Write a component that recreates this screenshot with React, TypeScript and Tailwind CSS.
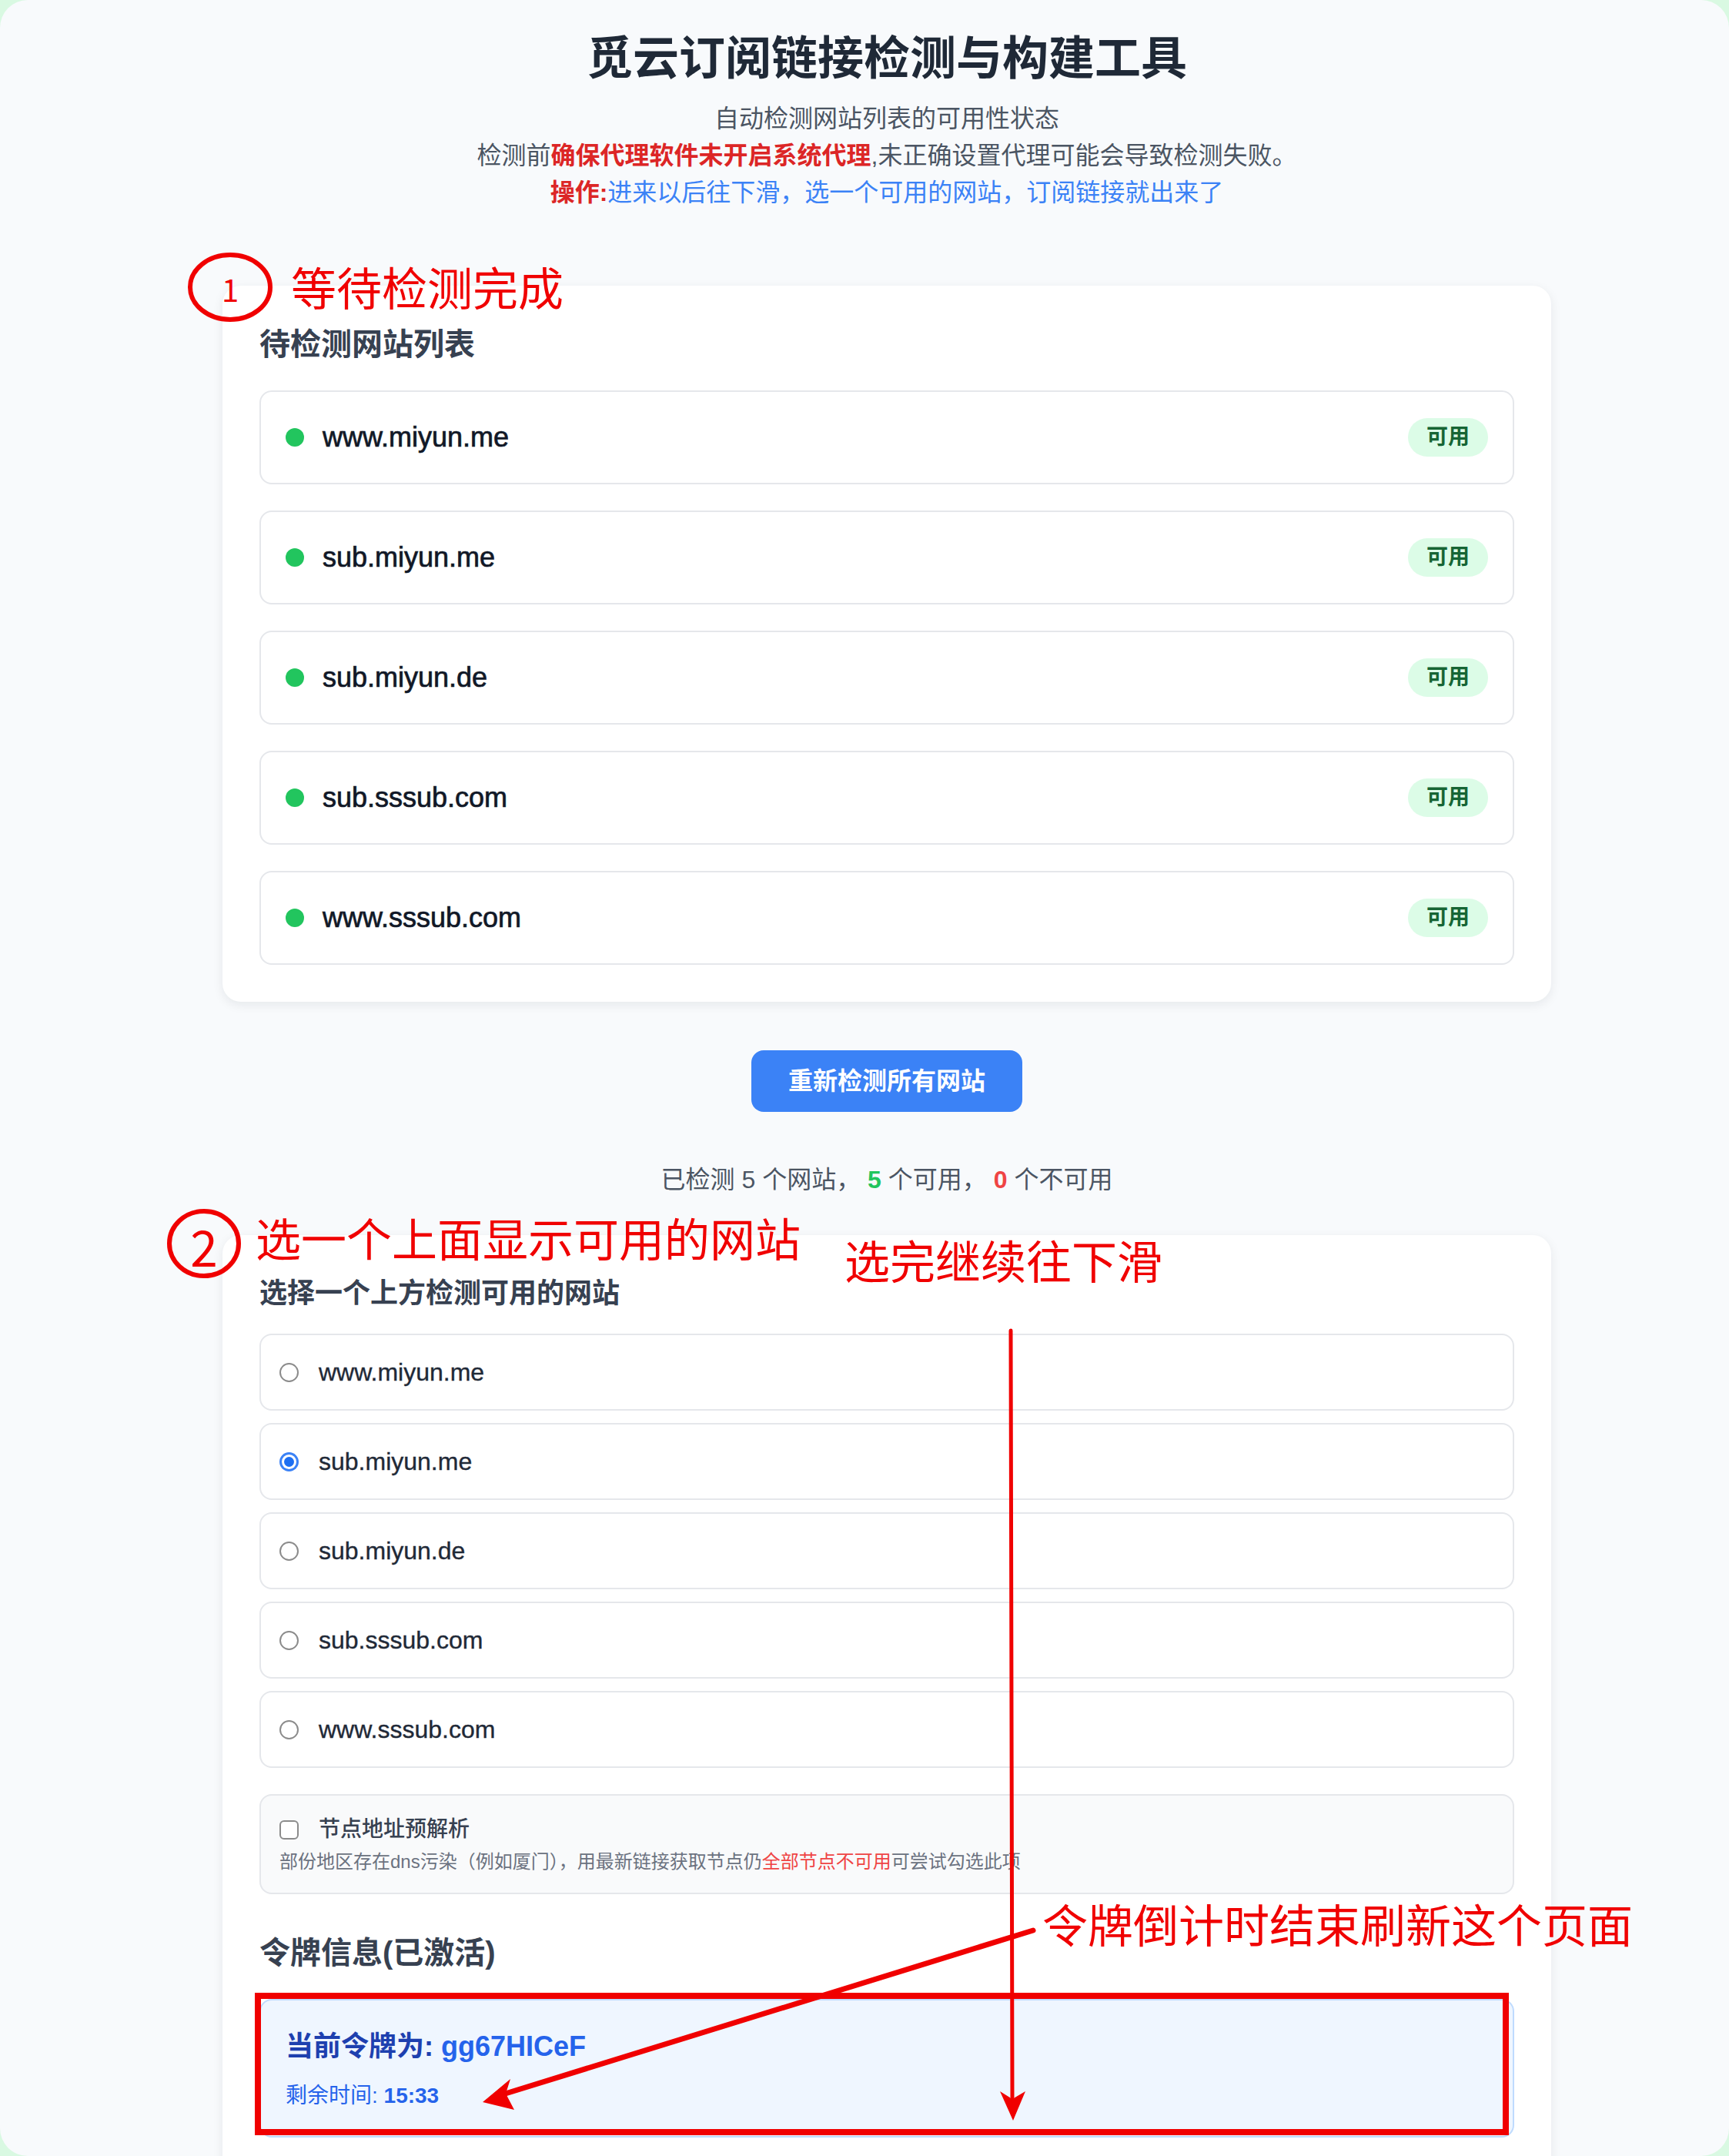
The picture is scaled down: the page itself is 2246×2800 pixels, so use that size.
import React from 'react';

const sites = ['www.miyun.me', 'sub.miyun.me', 'sub.miyun.de', 'sub.sssub.com', 'www.sssub.com'];
const RED = '#f00000';

function StatusRow({ name }: { name: string }) {
  return (
    <div className="flex h-[122px] items-center justify-between rounded-[16px] border-2 border-[#e5e7eb] bg-white px-[32px]">
      <div className="flex items-center gap-[24px]">
        <span className="h-[24px] w-[24px] rounded-full bg-[#22c55e]" />
        <span className="text-[36px] font-medium text-[#111827] [-webkit-text-stroke:0.7px_#111827]">{name}</span>
      </div>
      <span className="rounded-full bg-[#dcfce7] px-[24px] py-[5px] text-[28px] leading-[40px] font-semibold text-[#166534]">
        可用
      </span>
    </div>
  );
}

function RadioRow({ name, checked }: { name: string; checked?: boolean }) {
  return (
    <label className="flex h-[100px] items-center gap-[26px] rounded-[16px] border-2 border-[#e5e7eb] bg-white px-[24px]">
      {checked ? (
        <span className="flex h-[25px] w-[25px] items-center justify-center rounded-full bg-[#3b82f6]">
          <span className="flex h-[19px] w-[19px] items-center justify-center rounded-full bg-white">
            <span className="h-[13px] w-[13px] rounded-full bg-[#1d6ff2]" />
          </span>
        </span>
      ) : (
        <span className="h-[25px] w-[25px] rounded-full border-2 border-[#8b8b8b] bg-white" />
      )}
      <span className="text-[32px] leading-[48px] text-[#1f2937] [-webkit-text-stroke:0.35px_#1f2937]">{name}</span>
    </label>
  );
}

function Annotations() {
  const txt = {
    fill: RED,
    fontFamily: "'Noto Sans CJK SC', sans-serif",
    fontWeight: 400,
  } as const;
  return (
    <svg className="pointer-events-none absolute left-0 top-0" width={2246} height={2800} viewBox="0 0 2246 2800">
      <ellipse cx={299} cy={373} rx={52} ry={42} fill="none" stroke={RED} strokeWidth={6} />
      <text x={299} y={375} textAnchor="middle" dominantBaseline="central" fontSize={40} {...txt}>1</text>
      <text x={378} y={371} dominantBaseline="central" fontSize={59} {...txt}>等待检测完成</text>

      <ellipse cx={265} cy={1615} rx={45} ry={42} fill="none" stroke={RED} strokeWidth={6} />
      <text x={265} y={1617} textAnchor="middle" dominantBaseline="central" fontSize={64} {...txt}>2</text>
      <text x={332} y={1606} dominantBaseline="central" fontSize={59} {...txt}>选一个上面显示可用的网站</text>
      <text x={1097} y={1635} dominantBaseline="central" fontSize={59} {...txt}>选完继续往下滑</text>

      <line x1={1313} y1={1728} x2={1315} y2={2724} stroke={RED} strokeWidth={5} strokeLinecap="round" />
      <polygon points="1299,2716 1315,2726 1332,2716 1316,2754" fill={RED} />

      <text x={1354} y={2497} dominantBaseline="central" fontSize={59} {...txt}>令牌倒计时结束刷新这个页面</text>
      <line x1={1342} y1={2507} x2={650} y2={2721} stroke={RED} strokeWidth={7} strokeLinecap="round" />
      <polygon points="627,2730 663,2700 657,2719 668,2740" fill={RED} />

      <rect x={335} y={2592} width={1621} height={177} fill="none" stroke={RED} strokeWidth={8} />
    </svg>
  );
}

export default function App() {
  return (
    <div className="h-[2800px] w-[2246px] overflow-hidden bg-[#d9f9e2] font-['Liberation_Sans','Noto_Sans_CJK_SC',sans-serif]">
      <div className="relative h-full overflow-hidden rounded-[36px] bg-[#f8fafc]">
        <div className="ml-[289px] w-[1726px] pt-[41px]">
          <h1 className="text-center text-[60px] leading-[72px] font-bold text-[#1f2937]">觅云订阅链接检测与构建工具</h1>
          <div className="mt-[17px] text-center text-[32px] leading-[48px] text-[#4b5563]">
            <p>自动检测网站列表的可用性状态</p>
            <p>
              检测前<span className="font-bold text-[#dc2626]">确保代理软件未开启系统代理</span>,未正确设置代理可能会导致检测失败。
            </p>
            <p>
              <span className="font-bold text-[#dc2626]">操作:</span>
              <span className="text-[#3b82f6]">进来以后往下滑，选一个可用的网站，订阅链接就出来了</span>
            </p>
          </div>

          <section className="mt-[97px] rounded-[24px] bg-white p-[48px] shadow-[0_4px_14px_rgba(15,23,42,0.08)]">
            <h2 className="text-[40px] leading-[56px] font-semibold text-[#374151]">待检测网站列表</h2>
            <div className="mt-[32px] flex flex-col gap-[34px]">
              {sites.map((s) => (
                <StatusRow key={s} name={s} />
              ))}
            </div>
          </section>

          <div className="mt-[63px] flex justify-center">
            <button className="h-[80px] rounded-[16px] bg-[#3b82f6] px-[48px] text-[32px] font-semibold text-white">
              重新检测所有网站
            </button>
          </div>

          <p className="mt-[64px] text-center text-[32px] leading-[48px] text-[#4b5563]">
            已检测 5 个网站， <span className="font-semibold text-[#22c55e]">5</span> 个可用，{' '}
            <span className="font-semibold text-[#ef4444]">0</span> 个不可用
          </p>

          <section className="mt-[48px] rounded-[24px] bg-white p-[48px] shadow-[0_4px_14px_rgba(15,23,42,0.08)]">
            <h2 className="text-[36px] leading-[56px] font-semibold text-[#374151]">选择一个上方检测可用的网站</h2>
            <div className="mt-[24px] flex flex-col gap-[16px]">
              {sites.map((s) => (
                <RadioRow key={s} name={s} checked={s === 'sub.miyun.me'} />
              ))}
            </div>

            <div className="mt-[34px] rounded-[16px] border-2 border-[#e5e7eb] bg-[#f9fafb] px-[24px] py-[24px]">
              <label className="flex items-center gap-[26px]">
                <span className="h-[25px] w-[25px] rounded-[6px] border-2 border-[#8b8b8b] bg-white" />
                <span className="text-[28px] leading-[40px] font-medium text-[#374151]">节点地址预解析</span>
              </label>
              <p className="mt-[6px] text-[24px] leading-[32px] text-[#6b7280]">
                部份地区存在dns污染（例如厦门），用最新链接获取节点仍<span className="text-[#ef4444]">全部节点不可用</span>可尝试勾选此项
              </p>
            </div>

            <h2 className="mt-[48px] text-[40px] leading-[56px] font-semibold text-[#374151]">令牌信息(已激活)</h2>
            <div className="mt-[32px] rounded-[16px] border-2 border-[#bfdbfe] bg-[#eff6ff] p-[32px]">
              <p className="text-[36px] leading-[56px] font-bold text-[#1e40af]">
                当前令牌为: <span className="text-[#2563eb]">gg67HICeF</span>
              </p>
              <p className="mt-[16px] text-[28px] leading-[40px] text-[#2563eb]">
                剩余时间: <span className="font-bold">15:33</span>
              </p>
            </div>
          </section>
        </div>
        <Annotations />
      </div>
    </div>
  );
}
